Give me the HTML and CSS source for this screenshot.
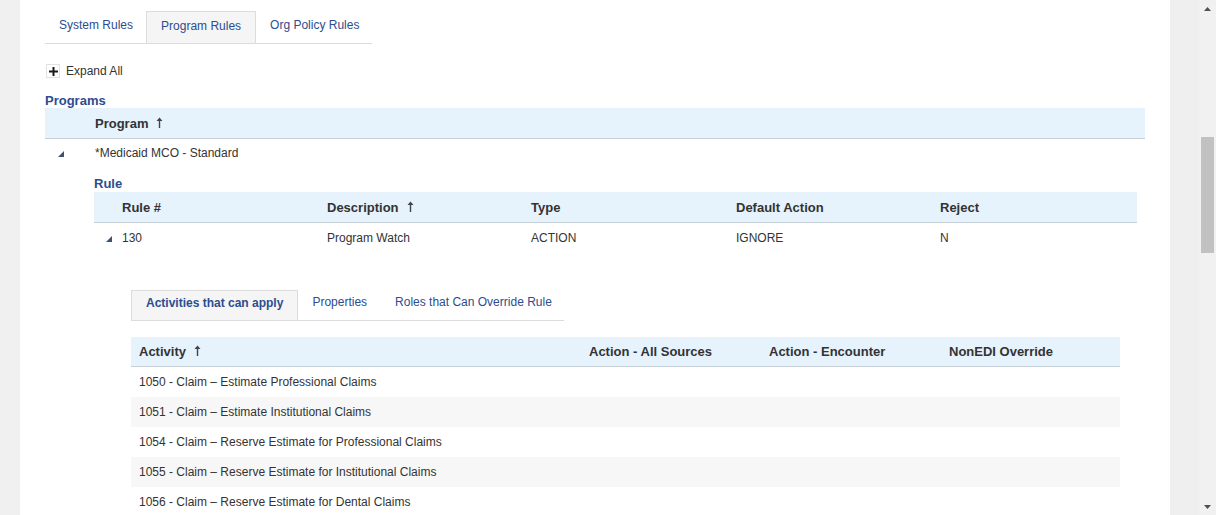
FILE: index.html
```html
<!DOCTYPE html>
<html>
<head>
<meta charset="utf-8">
<title>Program Rules</title>
<link rel="stylesheet" href="styles.css">
</head>
<body>
<div class="page">
  <div class="gutter-left"></div>
  <main class="panel">
    <div class="tabs">
      <div class="tab">System Rules</div>
      <div class="tab active">Program Rules</div>
      <div class="tab">Org Policy Rules</div>
    </div>

    <div class="expand">
      <span class="plus-box"><svg width="9" height="9" viewBox="0 0 9 9"><rect x="3.5" y="0" width="2" height="9" fill="#1a1a1a"/><rect x="0" y="3.5" width="9" height="2" fill="#1a1a1a"/></svg></span>
      <span>Expand All</span>
    </div>

    <h2 class="section-title">Programs</h2>
    <div class="grid programs-grid head">
      <div></div>
      <div class="hcell">Program <svg class="sort" width="7" height="11" viewBox="0 0 7 11"><path d="M3.5 0.5 L6.5 4 L4.2 4 L4.2 11 L2.8 11 L2.8 4 L0.5 4 Z" fill="#444"/></svg></div>
    </div>
    <div class="grid programs-grid row">
      <div class="exp-cell"><svg class="tri" width="6" height="6" viewBox="0 0 6 6"><path d="M6 0 L6 6 L0 6 Z" fill="#3e5173"/></svg></div>
      <div class="cell">*Medicaid MCO - Standard</div>
    </div>

    <section class="rule-section">
      <h2 class="section-title rule-title">Rule</h2>
      <div class="grid rule-grid head">
        <div class="hcell first">Rule #</div>
        <div class="hcell">Description <svg class="sort" width="7" height="11" viewBox="0 0 7 11"><path d="M3.5 0.5 L6.5 4 L4.2 4 L4.2 11 L2.8 11 L2.8 4 L0.5 4 Z" fill="#444"/></svg></div>
        <div class="hcell">Type</div>
        <div class="hcell">Default Action</div>
        <div class="hcell">Reject</div>
      </div>
      <div class="grid rule-grid row">
        <div class="cell first"><svg class="tri rule-tri" width="6" height="6" viewBox="0 0 6 6"><path d="M6 0 L6 6 L0 6 Z" fill="#3e5173"/></svg>130</div>
        <div class="cell">Program Watch</div>
        <div class="cell">ACTION</div>
        <div class="cell">IGNORE</div>
        <div class="cell">N</div>
      </div>

      <section class="detail">
        <div class="tabs subtabs">
          <div class="tab active bold">Activities that can apply</div>
          <div class="tab">Properties</div>
          <div class="tab">Roles that Can Override Rule</div>
        </div>

        <div class="grid act-grid head">
          <div class="hcell">Activity <svg class="sort" width="7" height="11" viewBox="0 0 7 11"><path d="M3.5 0.5 L6.5 4 L4.2 4 L4.2 11 L2.8 11 L2.8 4 L0.5 4 Z" fill="#444"/></svg></div>
          <div class="hcell">Action - All Sources</div>
          <div class="hcell">Action - Encounter</div>
          <div class="hcell">NonEDI Override</div>
        </div>
        <div class="grid act-grid row"><div class="cell">1050 - Claim – Estimate Professional Claims</div><div></div><div></div><div></div></div>
        <div class="grid act-grid row alt"><div class="cell">1051 - Claim – Estimate Institutional Claims</div><div></div><div></div><div></div></div>
        <div class="grid act-grid row"><div class="cell">1054 - Claim – Reserve Estimate for Professional Claims</div><div></div><div></div><div></div></div>
        <div class="grid act-grid row alt"><div class="cell">1055 - Claim – Reserve Estimate for Institutional Claims</div><div></div><div></div><div></div></div>
        <div class="grid act-grid row"><div class="cell">1056 - Claim – Reserve Estimate for Dental Claims</div><div></div><div></div><div></div></div>
      </section>
    </section>
  </main>
  <div class="gutter-right"></div>
  <div class="scrollbar">
    <div class="sb-arrow"><svg width="7" height="4" viewBox="0 0 7 4"><path d="M0 4 L3.5 0 L7 4 Z" fill="#505050"/></svg></div>
    <div class="sb-track">
      <div class="sb-thumb"></div>
    </div>
    <div class="sb-arrow"><svg width="7" height="4" viewBox="0 0 7 4"><path d="M0 0 L7 0 L3.5 4 Z" fill="#505050"/></svg></div>
  </div>
</div>
</body>
</html>
```

FILE: styles.css
```css
* { box-sizing: border-box; }
html, body { margin: 0; padding: 0; height: 100%; overflow: hidden; }
body {
  font-family: "Liberation Sans", Arial, sans-serif;
  font-size: 12px;
  color: #333;
  background: #fff;
}
.page {
  display: flex;
  height: 515px;
  overflow: hidden;
}
.gutter-left { width: 20px; flex: none; background: #f0f0f0; }
.gutter-right { width: 29px; flex: none; background: #efefef; }
.panel {
  width: 1150px;
  flex: none;
  background: #fff;
  padding: 11px 25px 0 25px;
  overflow: hidden;
}

/* tabs */
.tabs {
  display: flex;
  width: 327px;
  border-bottom: 1px solid #dcdcdc;
  height: 33px;
}
.tab {
  height: 32px;
  line-height: 26px;
  padding: 0 12px 0 13px;
  color: #2c4d8f;
  border: 1px solid transparent;
  border-bottom: none;
  white-space: nowrap;
}
.tab.active {
  background: #f5f5f5;
  border-color: #dcdcdc;
  line-height: 28px;
  padding: 0 14px 0 14px;
}
.subtabs { width: 433px; height: 31px; }
.subtabs .tab { height: 30px; line-height: 22px; padding: 0 13px; }
.subtabs .tab.active { line-height: 24px; padding: 0 14px; }
.tab.bold { font-weight: bold; }

/* expand */
.expand {
  display: flex;
  align-items: center;
  gap: 6px;
  margin-top: 20px;
  height: 14px;
  margin-left: 1px;
}
.plus-box {
  width: 14px; height: 14px;
  border: 1px solid #e2e2e2;
  background: #fff;
  display: flex; align-items: center; justify-content: center;
}

.section-title {
  margin: 15px 0 0 0;
  font-size: 13px;
  font-weight: bold;
  color: #2c4d8f;
  line-height: 15px;
  height: 15px;
}

.grid { display: grid; align-items: center; }
.head {
  background: #e6f2fc;
  height: 31px;
  border-bottom: 1px solid #c9d1d8;
  font-weight: bold;
  font-size: 13px;
  color: #333;
}
.row { height: 29px; }
.hcell, .cell { padding-left: 5px; white-space: nowrap; display: flex; align-items: center; }
.sort { margin-left: 8px; margin-top: -2px; }

.programs-grid { grid-template-columns: 45px 1fr; }
.programs-grid .hcell { padding-top: 1px; }
.programs-grid.row { padding-bottom: 2px; }
.exp-cell { display: flex; padding-left: 13px; padding-top: 2px; }
.tri { display: block; }

.rule-section { margin-left: 49px; margin-right: 8px; }
.rule-title { margin-top: 7px; margin-bottom: 0; padding-top: 1px; }
.rule-section > .rule-title { height: 17px; }
.rule-grid { grid-template-columns: 228px 204px 205px 204px 1fr; }
.rule-grid .first { padding-left: 28px; position: relative; }
.rule-grid.head { height: 31px; }
.rule-grid.row { height: 30px; }
.rule-tri { position: absolute; left: 12px; top: 50%; margin-top: -2px; }

.detail { margin: 37px 17px 0 37px; }
.act-grid { grid-template-columns: 450px 180px 180px 1fr; }
.act-grid .hcell, .act-grid .cell { padding-left: 8px; }
.act-grid.head { margin-top: 16px; height: 30px; }
.act-grid.row { height: 30px; }
.act-grid.alt { background: #f7f7f7; }

/* scrollbar */
.scrollbar {
  width: 17px;
  flex: none;
  background: #f1f1f1;
  display: flex;
  flex-direction: column;
}
.sb-arrow { height: 17px; display: flex; align-items: center; justify-content: center; }
.sb-track { flex: 1; padding: 120px 2px 0 2px; }
.sb-thumb { height: 116px; background: #c1c1c1; }
```
